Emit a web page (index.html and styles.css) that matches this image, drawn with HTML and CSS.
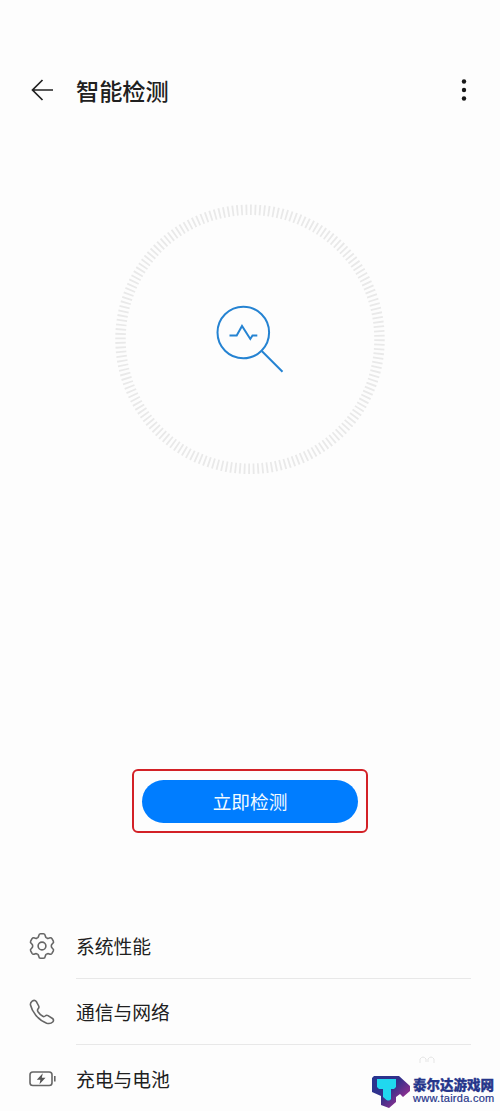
FILE: index.html
```html
<!DOCTYPE html>
<html lang="zh-CN">
<head>
<meta charset="utf-8">
<title>智能检测</title>
<link rel="stylesheet" href="styles.css">
</head>
<body>
<div class="screen">
  <header class="bar">
    <svg class="back" width="24" height="24" viewBox="0 0 24 24"><path d="M23 12H2.5M12.5 2L2.5 12l10 10"/></svg>
    <h1 class="title">智能检测</h1>
    <svg class="more" width="6" height="24" viewBox="0 0 6 24"><circle cx="3" cy="3.5" r="2.2"/><circle cx="3" cy="12" r="2.2"/><circle cx="3" cy="20.5" r="2.2"/></svg>
  </header>
  <main class="scan">
    <svg class="dial" width="270" height="270" viewBox="0 0 270 270">
      <circle class="ticks" cx="135" cy="135.3" r="129.5" pathLength="720"/>
      <g class="lens"><circle cx="128.3" cy="128.5" r="25.8"/><path d="M147 147.3l20.5 20.5M114.5 131.5h7.2l5.3-9.5 8.3 13 2.2-3.5h4.8"/></g>
    </svg>
  </main>
  <div class="highlight"><button class="start">立即检测</button></div>
  <ul class="list">
    <li class="item">
      <svg class="icon" width="28" height="28" viewBox="0 0 28 28">
        <defs><path id="tooth" d="M9.35 5.95Q10.6 5.23 10.8 3.7Q11 1.8 12.6 1.7H15.4Q17 1.8 17.2 3.7Q17.4 5.23 18.65 5.95"/></defs>
        <use href="#tooth"/><use href="#tooth" transform="rotate(60 14 14)"/><use href="#tooth" transform="rotate(120 14 14)"/><use href="#tooth" transform="rotate(180 14 14)"/><use href="#tooth" transform="rotate(240 14 14)"/><use href="#tooth" transform="rotate(300 14 14)"/>
        <circle cx="14" cy="14" r="3.9"/>
      </svg>
      <span class="label">系统性能</span>
    </li>
    <li class="item">
      <svg class="icon" width="28" height="28" viewBox="0 0 28 28"><path d="M4.2 3.1Q6.7 1.3 8.5 3.8L10.7 8Q11.4 9.6 10.1 10.8Q9 12.1 10 13.7Q12 16.7 14.8 18.3Q16 19 17.2 18Q18.5 16.8 20 17.6L24.5 20.5Q26.4 22 24.7 24Q22.5 26.3 18.7 25.2Q12.5 23 7.8 17.2Q3.6 12 2.5 7Q2 4.7 4.2 3.1Z"/></svg>
      <span class="label">通信与网络</span>
    </li>
    <li class="item">
      <svg class="icon" width="28" height="28" viewBox="0 0 28 28"><rect x="2" y="7" width="22" height="13.5" rx="2.8"/><path d="M26.8 11v5.5"/><path class="bolt" d="M14.8 8.3L8.8 14.7h3.6L11.5 19.3l6-6.6h-3.7z"/></svg>
      <span class="label">充电与电池</span>
    </li>
  </ul>
  <div class="mark">
    <svg class="faint" width="18" height="8" viewBox="0 0 18 8"><path d="M1 7V3q3-4 6 0v3m2 0V3q3-4 6 0v4"/></svg>
    <svg class="logo" width="40" height="36" viewBox="0 0 40 36">
      <defs><linearGradient id="shade" x1="0" y1="0" x2="1" y2="0.8"><stop offset="0" stop-color="#26358f"/><stop offset=".5" stop-color="#34308b"/><stop offset="1" stop-color="#b32f91"/></linearGradient></defs>
      <path fill="url(#shade)" d="M3 1H28L39 11V16L32 22L29 19L25 22V27L18 33L10 30V21L1 17V3Z"/>
      <path fill="#20d8ef" d="M6 4H25V12L23 14H20V24Q18.5 26.5 15.5 25L12 22V14H8L6 12Z"/>
    </svg>
    <div class="words"><span class="name">泰尔达游戏网</span><span class="url">www.tairda.com</span></div>
  </div>
</div>
</body>
</html>
```
FILE: styles.css
```css
* { box-sizing: border-box; }
body { margin: 0; background: #fdfdfd; font-family: "Noto Sans CJK SC", sans-serif; color: #202020; }
.screen { position: relative; width: 500px; height: 1111px; display: flex; flex-direction: column; align-items: center; overflow: hidden; }
.screen > * { flex-shrink: 0; }
.bar { width: 100%; height: 48px; margin-top: 66px; padding: 0 33px 0 30px; display: flex; align-items: center; }
.back { fill: none; stroke: #222; stroke-width: 1.7; }
.title { flex: 1; margin: 0 0 0 22px; font-size: 23.2px; line-height: 34px; font-weight: 500; }
.more { fill: #181818; }
.scan { margin-top: 90px; height: 270px; }
.dial { display: block; fill: none; }
.ticks { stroke: #e9e9e9; stroke-width: 10.5; stroke-dasharray: 1.6 2.4; }
.lens { stroke: #2583d2; stroke-width: 2; }
.highlight { width: 236px; height: 64px; margin-top: 295px; padding: 9px 8px; border: 2px solid #d32127; border-radius: 6px; display: flex; }
.start { width: 100%; height: 43px; padding: 0 0 1px; border: 0; border-radius: 22px; background: #007dff; color: #f4fbff; font: 400 18.7px/42px "Noto Sans CJK SC", sans-serif; }
.list { list-style: none; width: 100%; margin: 80px 0 0; padding: 0 29px 0 28px; }
.item { display: flex; align-items: center; gap: 20px; height: 66.3px; }
.icon { flex: none; fill: none; stroke: #666; stroke-width: 1.6; stroke-linejoin: round; }
.icon .bolt { fill: #555; stroke: none; }
.label { flex: 1; height: 66px; font-size: 18.8px; line-height: 66px; border-bottom: 1px solid #e8e8e8; }
.item:last-child .label { border-color: transparent; }
.mark { position: absolute; left: 371px; top: 1075px; display: flex; gap: 2px; }
.faint { position: absolute; left: 48px; top: -19px; fill: none; stroke: #e5e5e5; }
.words { display: flex; flex-direction: column; white-space: nowrap; color: #26368b; }
.name { font-size: 13.5px; line-height: 18px; font-weight: 900; -webkit-text-stroke: .3px #26368b; }
.url { font: 11px/11px "Liberation Sans", sans-serif; letter-spacing: .28px; -webkit-text-stroke: .2px #26368b; }
```
